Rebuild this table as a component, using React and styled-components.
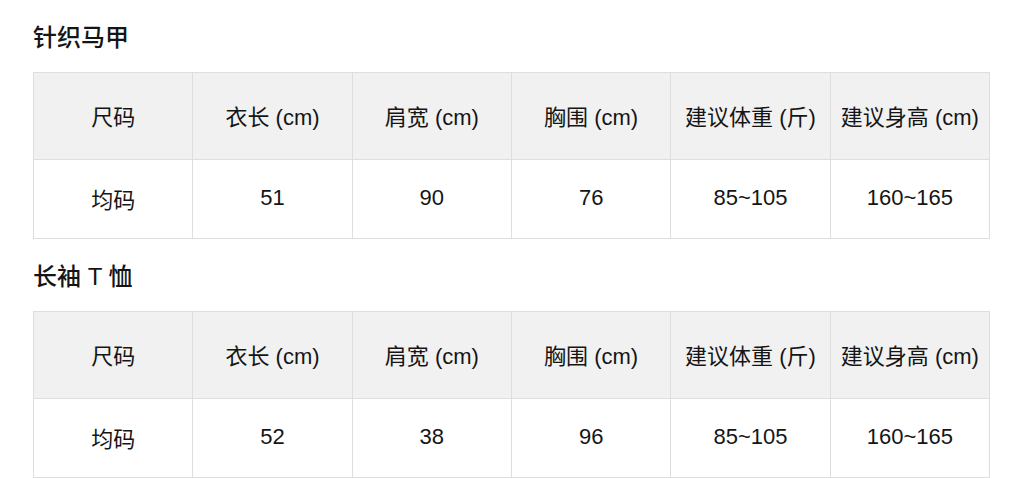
import styled, { createGlobalStyle } from "styled-components";

const GlobalStyle = createGlobalStyle`
  body {
    margin: 0;
    background: #fff;
    color: #151515;
    font-family: "Liberation Sans", "Noto Sans CJK SC", sans-serif;
  }
`;

const Page = styled.div`
  padding: 24px 0 0 33px;
  display: flex;
  flex-direction: column;
  gap: 24px;
`;

const Section = styled.section`
  display: flex;
  flex-direction: column;
  gap: 20px;
`;

const Title = styled.h2`
  margin: 0;
  font-size: 24px;
  line-height: 28px;
  font-weight: 500;
`;

const Table = styled.table`
  width: 957px;
  border-collapse: collapse;
  table-layout: fixed;
  font-size: 22px;
`;

const Cell = styled.td`
  border: 1px solid #dedede;
  text-align: center;
  vertical-align: middle;
  padding: 0 0 3px;
  white-space: nowrap;
  font-weight: 400;
  height: ${(p) => (p.$head ? "83px" : "75px")};
  background: ${(p) => (p.$head ? "#f1f1f1" : "#fff")};
`;

const headers = ["尺码", "衣长 (cm)", "肩宽 (cm)", "胸围 (cm)", "建议体重 (斤)", "建议身高 (cm)"];

const products = [
  { name: "针织马甲", row: ["均码", "51", "90", "76", "85~105", "160~165"] },
  { name: "长袖 T 恤", row: ["均码", "52", "38", "96", "85~105", "160~165"] },
];

const SizeTable = ({ row }) => (
  <Table>
    <thead>
      <tr>
        {headers.map((h) => (
          <Cell as="th" $head key={h}>
            {h}
          </Cell>
        ))}
      </tr>
    </thead>
    <tbody>
      <tr>
        {row.map((v, i) => (
          <Cell key={i}>{v}</Cell>
        ))}
      </tr>
    </tbody>
  </Table>
);

const App = () => (
  <>
    <GlobalStyle />
    <Page>
      {products.map((p) => (
        <Section key={p.name}>
          <Title>{p.name}</Title>
          <SizeTable row={p.row} />
        </Section>
      ))}
    </Page>
  </>
);

export default App;
